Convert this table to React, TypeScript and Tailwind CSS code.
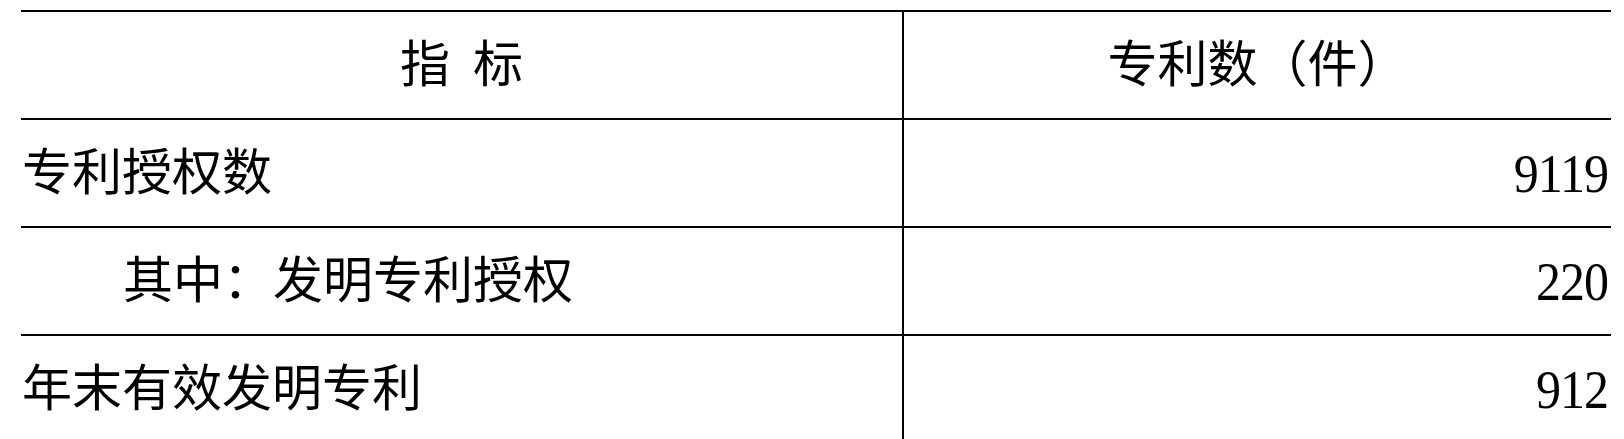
import React from "react"

type Row = {
  label: string
  value: string
  indent?: boolean
}

const rows: Row[] = [
  { label: "专利授权数", value: "9119" },
  { label: "其中：发明专利授权", value: "220", indent: true },
  { label: "年末有效发明专利", value: "912" },
]

const App = () => {
  return (
    <div className="w-[1624px] h-[439px] overflow-hidden bg-white pt-[10px] pl-[21px] font-['Liberation_Serif','Noto_Sans_CJK_SC',serif] text-[50px] leading-none text-black">
      <div className="w-[1590px] grid grid-cols-[881px_709px]">
        {/* header */}
        <div className="h-[108px] border-t-2 border-black flex items-center justify-center gap-[23px]">
          <span>指</span>
          <span>标</span>
        </div>
        <div className="h-[108px] border-t-2 border-l-2 border-black flex items-center justify-center">
          专利数（件）
        </div>

        {rows.map((row) => (
          <React.Fragment key={row.label}>
            <div
              className={
                row.indent
                  ? "h-[108px] border-t-2 border-black flex items-center pl-[102px]"
                  : "h-[108px] border-t-2 border-black flex items-center pl-[1px]"
              }
            >
              {row.label}
            </div>
            <div className="h-[108px] border-t-2 border-l-2 border-black flex items-center justify-end pr-[3px]">
              <span className="inline-block scale-y-110 tracking-[-1px]">{row.value}</span>
            </div>
          </React.Fragment>
        ))}
      </div>
    </div>
  )
}

export default App
